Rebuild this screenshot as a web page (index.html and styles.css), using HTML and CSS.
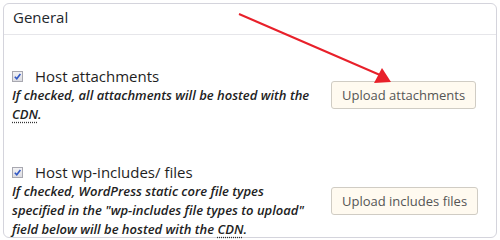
FILE: index.html
```html
<!DOCTYPE html>
<html lang="en">

<head>
    <meta charset="UTF-8">
    <title>CDN Settings</title>
    <link rel="stylesheet" href="styles.css">
</head>

<body>
    <div class="postbox">
        <h2 class="hndle">General</h2>

        <div class="inside">
            <!-- Attachments -->
            <div class="row">
                <div class="field">
                    <label><span class="cb"><svg viewBox="0 0 10 10"><path d="M2 5.2 L4.2 7.6 L8.2 2.2" /></svg></span>Host attachments</label>
                    <p class="desc">If checked, all attachments will be hosted with the <abbr>CDN</abbr>.</p>
                </div>
                <button class="button">Upload attachments</button>
            </div>

            <!-- wp-includes -->
            <div class="row">
                <div class="field">
                    <label><span class="cb"><svg viewBox="0 0 10 10"><path d="M2 5.2 L4.2 7.6 L8.2 2.2" /></svg></span>Host wp-includes/ files</label>
                    <p class="desc">If checked, WordPress static core file types specified in the "wp-includes file types to upload" field below will be hosted with the <abbr>CDN</abbr>.</p>
                </div>
                <button class="button">Upload includes files</button>
            </div>
        </div>
    </div>

    <!-- annotation arrow -->
    <svg class="arrow" width="500" height="240" viewBox="0 0 500 240">
        <line x1="239" y1="14" x2="380" y2="75" />
        <polygon points="374,83 382,68 391,82" />
    </svg>
</body>

</html>
```

FILE: styles.css
```css
* {
    margin: 0;
    padding: 0;
    box-sizing: border-box;
}

body {
    font-family: "Open Sans", Arial, sans-serif;
    background-color: #ffffff;
    color: #222;
    padding: 3px 3px 0 3px;
    width: 500px;
    height: 240px;
    overflow: hidden;
}

.postbox {
    width: 494px;
    height: 235px;
    border: 1px solid #d4d4dc;
    border-radius: 6px;
    background: #fff;
}

.hndle {
    font-size: 15px;
    font-weight: 400;
    color: #23282d;
    height: 31px;
    line-height: 26px;
    padding-left: 9px;
    border-bottom: 1px solid #e6e6ea;
}

.inside {
    padding: 31px 0 0 8px;
}

.row {
    display: flex;
    align-items: center;
    margin-bottom: 38px;
}

.field {
    width: 319px;
}

label {
    display: flex;
    align-items: center;
    font-size: 15px;
    color: #1e1e1e;
    line-height: 20px;
}

.cb {
    width: 11px;
    height: 11px;
    margin-right: 12px;
    border: 1px solid #a8a8b0;
    background: linear-gradient(#f2f2f4, #dcdce2);
    display: inline-flex;
}

.cb svg {
    width: 9px;
    height: 9px;
    fill: none;
    stroke: #3359c4;
    stroke-width: 1.8;
}

.desc {
    width: 300px;
    font-size: 13px;
    font-weight: 600;
    font-style: italic;
    line-height: 19px;
    color: #222;
}

abbr {
    text-decoration: underline dotted #333;
    text-underline-offset: 3px;
}

.button {
    font-family: "Open Sans", Arial, sans-serif;
    font-size: 13px;
    color: #555;
    background: #fffaf0;
    border: 1px solid #d0ccc4;
    border-radius: 3px;
    height: 28px;
    padding: 0 10px;
}

.arrow {
    position: absolute;
    top: 0;
    left: 0;
}

.arrow line {
    stroke: #e8202a;
    stroke-width: 2;
}

.arrow polygon {
    fill: #e8202a;
}
```
